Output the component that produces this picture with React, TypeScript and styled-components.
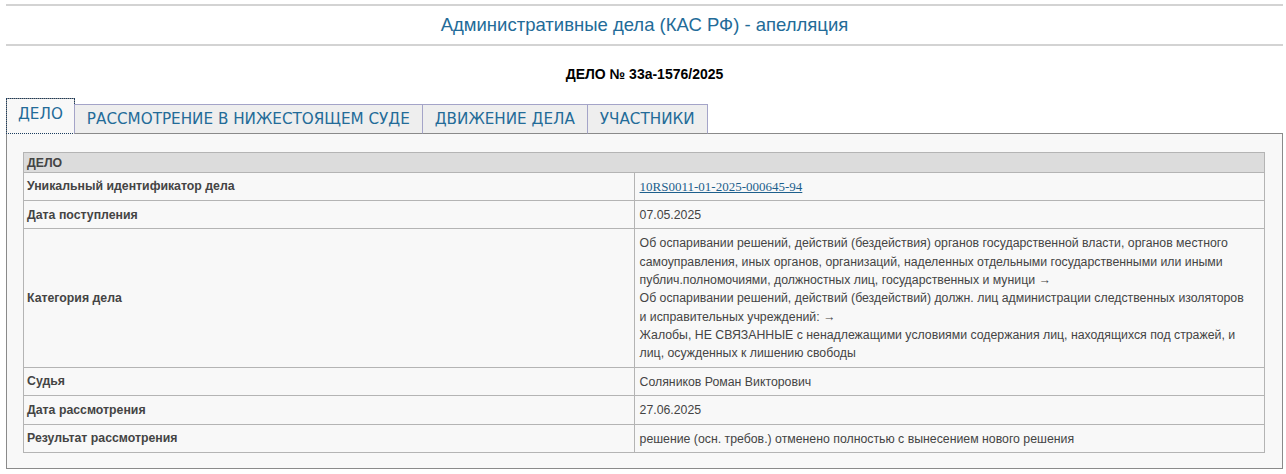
import React from "react";
import styled, { createGlobalStyle } from "styled-components";

const GlobalStyle = createGlobalStyle`
  html, body {
    margin: 0;
    padding: 0;
    background: #ffffff;
  }
  body {
    font-family: "Liberation Sans", Arial, sans-serif;
  }
`;

const Page = styled.div`
  padding: 4px 3px 0 6px;
`;

const TitleBar = styled.div`
  border-top: 2px solid #d3d3d3;
  border-bottom: 2px solid #d3d3d3;
  height: 38px;
  display: flex;
  align-items: center;
  justify-content: center;
`;

const Title = styled.h2`
  margin: 0;
  font-size: 18.5px;
  font-weight: normal;
  color: #236b98;
`;

const CaseNumber = styled.div`
  text-align: center;
  font-size: 14px;
  font-weight: bold;
  color: #000;
  margin-top: 20px;
  height: 32px;
`;

const Tabs = styled.div`
  display: flex;
  align-items: flex-end;
  position: relative;
  z-index: 1;
  margin-bottom: -1px;
`;

const Tab = styled.div<{ $active?: boolean }>`
  font-family: "DejaVu Sans", Verdana, sans-serif;
  font-size: 15.2px;
  color: #236b98;
  box-sizing: border-box;
  padding: 0 ${(p) => (p.$active ? "11px" : "12px")};
  display: flex;
  align-items: center;
  height: ${(p) => (p.$active ? "36px" : "30px")};
  background: ${(p) => (p.$active ? "#f8f8f8" : "#eeeeee")};
  border: ${(p) => (p.$active ? "1px solid #8a8a8a" : "1px solid #a4a4c8")};
  border-bottom: ${(p) => (p.$active ? "1px solid #f8f8f8" : "1px solid #8a8a8a")};
  margin-left: ${(p) => (p.$active ? "0" : "-1px")};
  outline: ${(p) => (p.$active ? "1px dotted #1b3c5e" : "none")};
  outline-offset: -1px;
  padding-bottom: ${(p) => (p.$active ? "4px" : "0")};
`;

const Panel = styled.div`
  border: 1px solid #8a8a8a;
  background: #f8f8f8;
  padding: 18px 17px 15px 16px;
`;

const Table = styled.table`
  width: 100%;
  border-collapse: collapse;
  font-size: 12.3px;
  color: #444;
`;

const HeadCell = styled.th`
  background: #dcdcdc;
  border: 1px solid #b4b4b4;
  text-align: left;
  font-weight: bold;
  color: #444;
  padding: 1px 3px 0;
  height: 17.5px;
`;

const Label = styled.td`
  border: 1px solid #b4b4b4;
  font-weight: bold;
  color: #444;
  padding: 5px 3px 4px;
  line-height: 17px;
  width: 49.2%;
`;

const Value = styled.td`
  border: 1px solid #b4b4b4;
  padding: 5px 14px 4.2px 5px;
  line-height: 18.3px;
  color: #444;
`;

const CaseLink = styled.a`
  font-family: "Liberation Serif", "Times New Roman", serif;
  font-size: 13px;
  line-height: 1;
  color: #1d5f8c;
  text-decoration: underline;
`;

const rows: { label: string; value: React.ReactNode }[] = [
  {
    label: "Уникальный идентификатор дела",
    value: <CaseLink href="#">10RS0011-01-2025-000645-94</CaseLink>,
  },
  { label: "Дата поступления", value: "07.05.2025" },
  {
    label: "Категория дела",
    value: (
      <>
        Об оспаривании решений, действий (бездействия) органов государственной
        власти, органов местного самоуправления, иных органов, организаций,
        наделенных отдельными государственными или иными
        публич.полномочиями, должностных лиц, государственных и муници →
        <br />
        Об оспаривании решений, действий (бездействий) должн. лиц
        администрации следственных изоляторов и исправительных учреждений: →
        <br />
        Жалобы, НЕ СВЯЗАННЫЕ с ненадлежащими условиями содержания лиц,
        находящихся под стражей, и лиц, осужденных к лишению свободы
      </>
    ),
  },
  { label: "Судья", value: "Соляников Роман Викторович" },
  { label: "Дата рассмотрения", value: "27.06.2025" },
  {
    label: "Результат рассмотрения",
    value: "решение (осн. требов.) отменено полностью с вынесением нового решения",
  },
];

const tabs = ["ДЕЛО", "РАССМОТРЕНИЕ В НИЖЕСТОЯЩЕМ СУДЕ", "ДВИЖЕНИЕ ДЕЛА", "УЧАСТНИКИ"];

export default function App() {
  return (
    <Page>
      <GlobalStyle />
      <TitleBar>
        <Title>Административные дела (КАС РФ) - апелляция</Title>
      </TitleBar>
      <CaseNumber>ДЕЛО № 33а-1576/2025</CaseNumber>
      <Tabs>
        {tabs.map((t, i) => (
          <Tab key={t} $active={i === 0}>
            {t}
          </Tab>
        ))}
      </Tabs>
      <Panel>
        <Table>
          <thead>
            <tr>
              <HeadCell colSpan={2}>ДЕЛО</HeadCell>
            </tr>
          </thead>
          <tbody>
            {rows.map((r) => (
              <tr key={r.label}>
                <Label>{r.label}</Label>
                <Value>{r.value}</Value>
              </tr>
            ))}
          </tbody>
        </Table>
      </Panel>
    </Page>
  );
}
